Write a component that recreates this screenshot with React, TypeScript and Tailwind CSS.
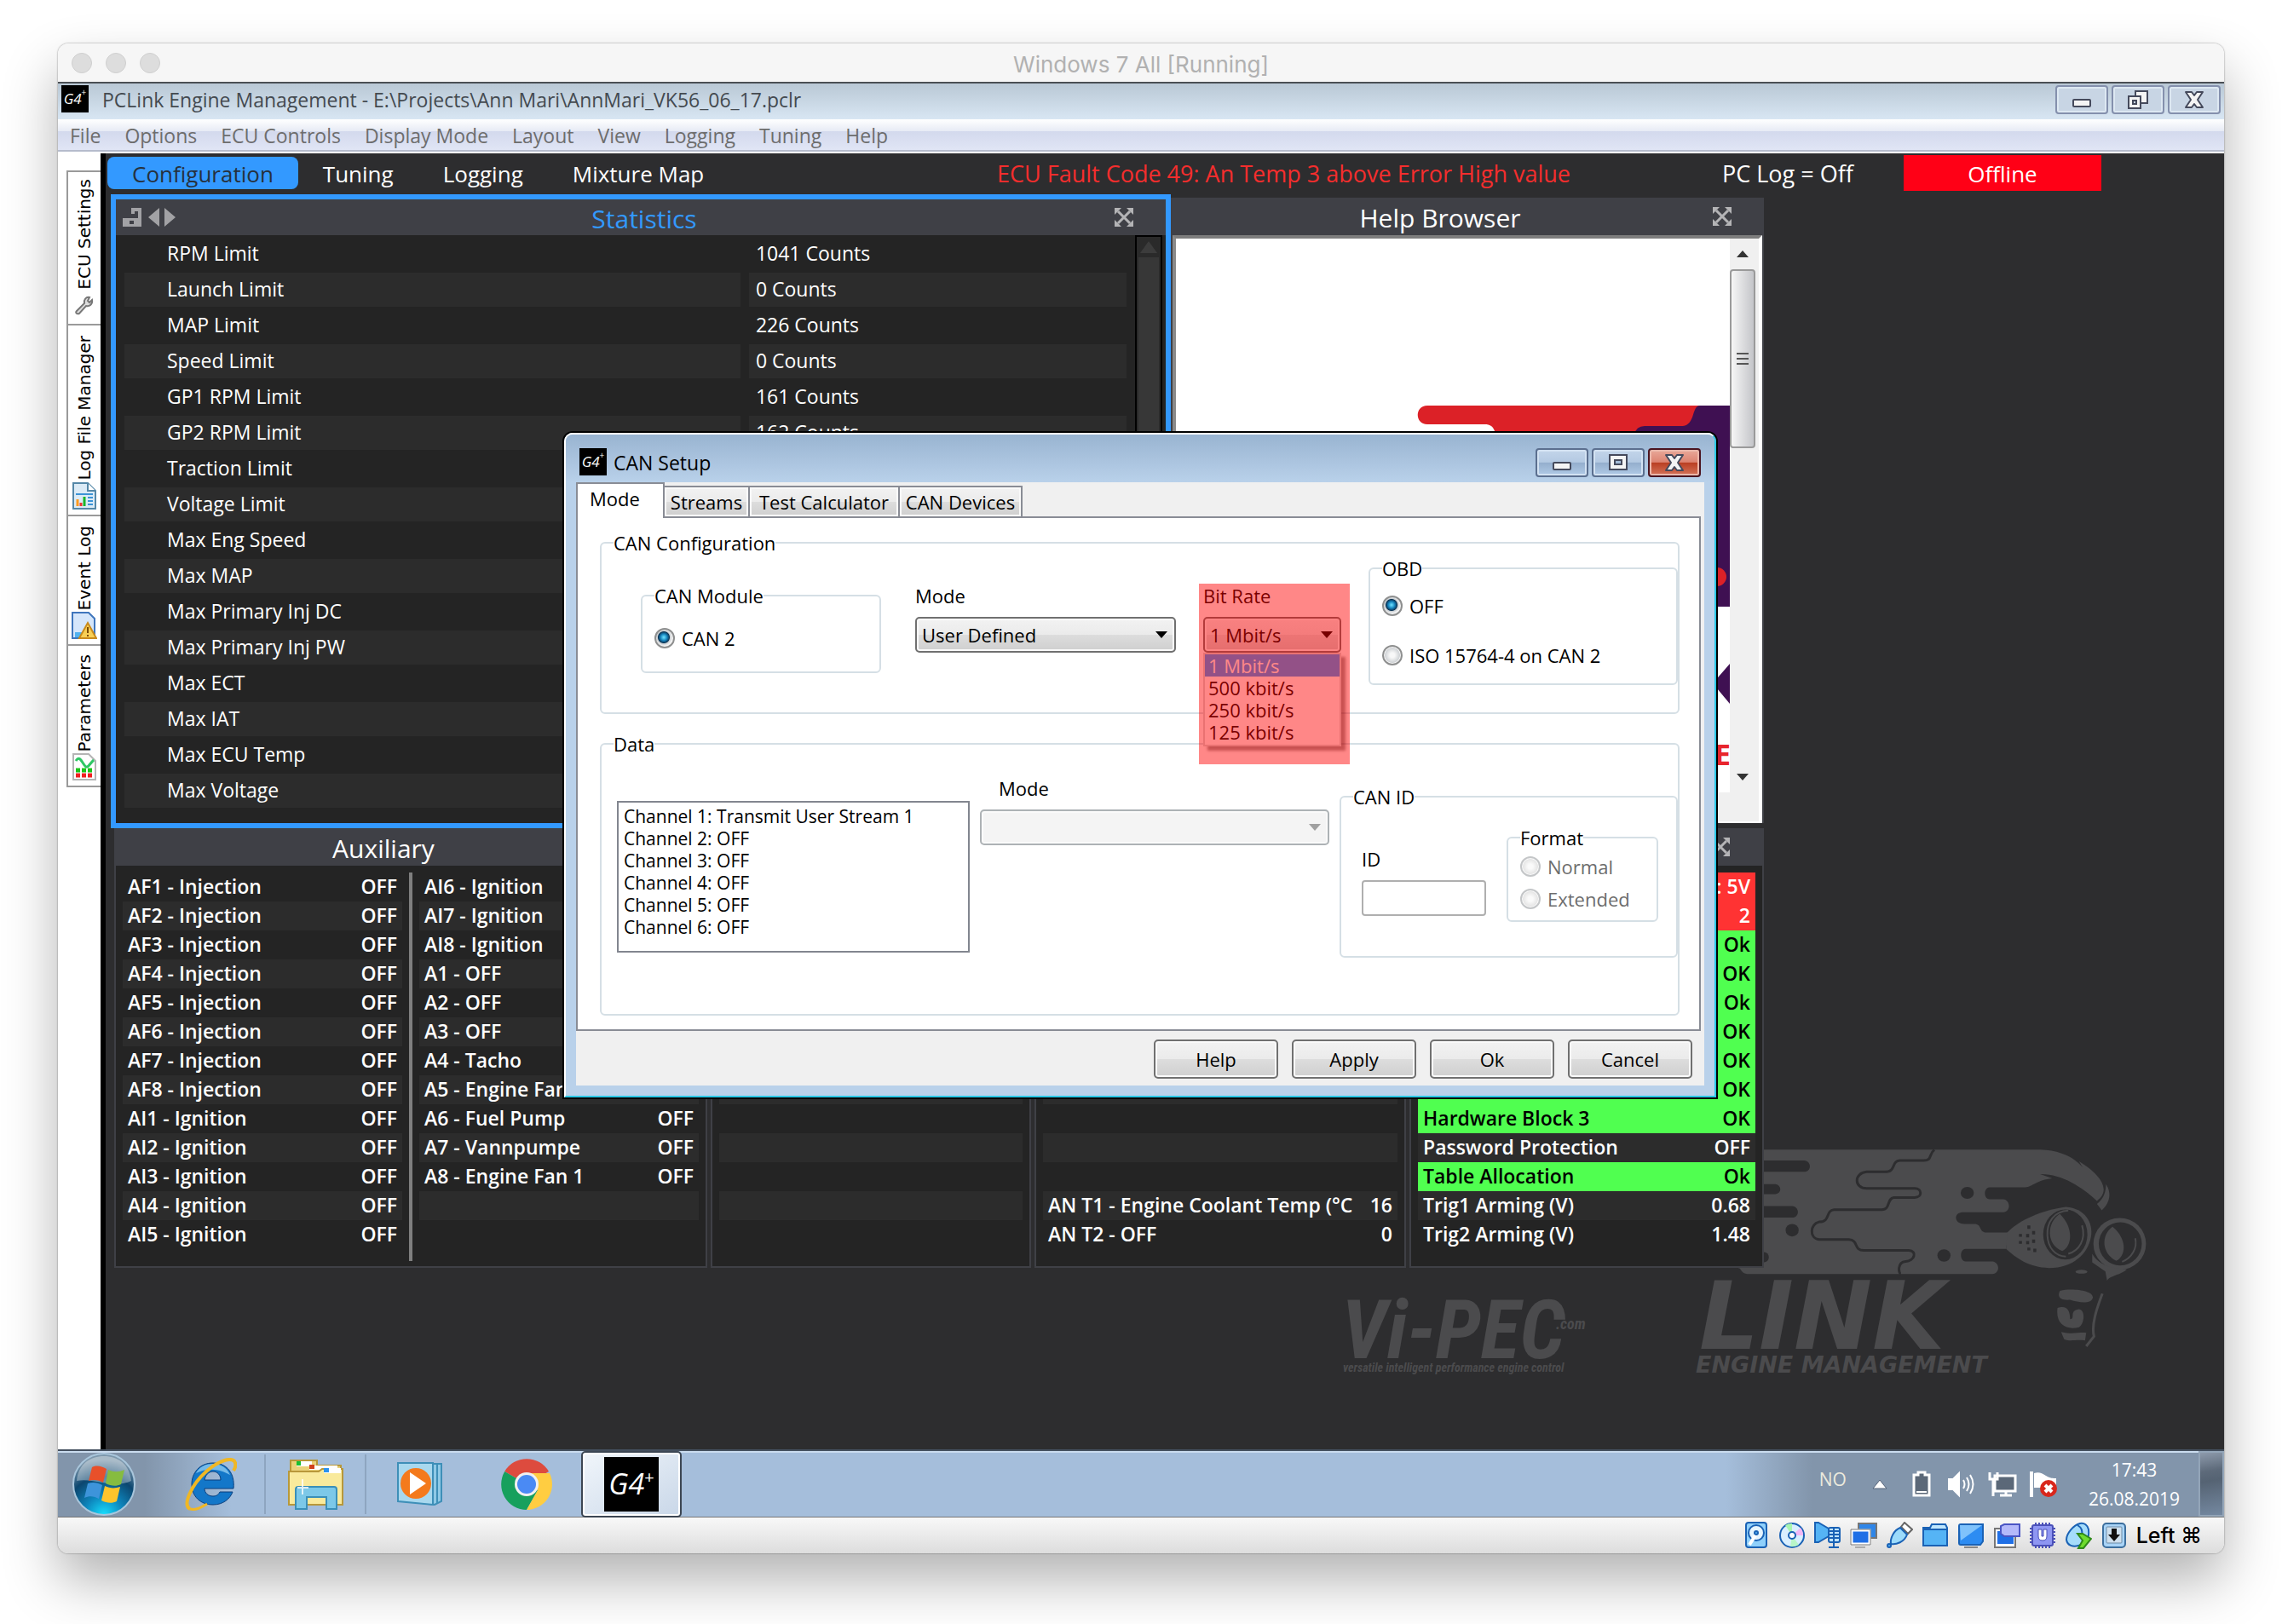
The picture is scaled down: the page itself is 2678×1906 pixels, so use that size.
import type { ReactNode } from 'react';
import clsx from 'clsx';

const statistics = [
  ['RPM Limit', '1041 Counts'],
  ['Launch Limit', '0 Counts'],
  ['MAP Limit', '226 Counts'],
  ['Speed Limit', '0 Counts'],
  ['GP1 RPM Limit', '161 Counts'],
  ['GP2 RPM Limit', '162 Counts'],
  ['Traction Limit', ''],
  ['Voltage Limit', ''],
  ['Max Eng Speed', ''],
  ['Max MAP', ''],
  ['Max Primary Inj DC', ''],
  ['Max Primary Inj PW', ''],
  ['Max ECT', ''],
  ['Max IAT', ''],
  ['Max ECU Temp', ''],
  ['Max Voltage', ''],
];

type Row = { name: string; value: string; tone?: 'ok' | 'error' };

const off = (name: string): Row => ({ name, value: 'OFF' });
const empty: Row = { name: '', value: '' };

const auxLeft: Row[] = [
  off('AF1 - Injection'),
  off('AF2 - Injection'),
  off('AF3 - Injection'),
  off('AF4 - Injection'),
  off('AF5 - Injection'),
  off('AF6 - Injection'),
  off('AF7 - Injection'),
  off('AF8 - Injection'),
  off('AI1 - Ignition'),
  off('AI2 - Ignition'),
  off('AI3 - Ignition'),
  off('AI4 - Ignition'),
  off('AI5 - Ignition'),
];

const auxRight: Row[] = [
  off('AI6 - Ignition'),
  off('AI7 - Ignition'),
  off('AI8 - Ignition'),
  off('A1 - OFF'),
  off('A2 - OFF'),
  off('A3 - OFF'),
  off('A4 - Tacho'),
  off('A5 - Engine Fan 2'),
  off('A6 - Fuel Pump'),
  off('A7 - Vannpumpe'),
  off('A8 - Engine Fan 1'),
  empty,
  empty,
];

const blank: Row[] = Array.from({ length: 13 }, () => empty);

const analog: Row[] = [
  ...blank.slice(0, 11),
  { name: 'AN T1 - Engine Coolant Temp (°C', value: '16' },
  { name: 'AN T2 - OFF', value: '0' },
];

const status: Row[] = [
  { name: '', value: ': 5V', tone: 'error' },
  { name: '', value: '2', tone: 'error' },
  { name: '', value: 'Ok', tone: 'ok' },
  { name: '', value: 'OK', tone: 'ok' },
  { name: '', value: 'Ok', tone: 'ok' },
  { name: '', value: 'OK', tone: 'ok' },
  { name: '', value: 'OK', tone: 'ok' },
  { name: '', value: 'OK', tone: 'ok' },
  { name: 'Hardware Block 3', value: 'OK', tone: 'ok' },
  { name: 'Password Protection', value: 'OFF' },
  { name: 'Table Allocation', value: 'Ok', tone: 'ok' },
  { name: 'Trig1 Arming (V)', value: '0.68' },
  { name: 'Trig2 Arming (V)', value: '1.48' },
];

const menus = ['File', 'Options', 'ECU Controls', 'Display Mode', 'Layout', 'View', 'Logging', 'Tuning', 'Help'];
const bitRates = ['1 Mbit/s', '500 kbit/s', '250 kbit/s', '125 kbit/s'];
const channels = [
  'Channel 1: Transmit User Stream 1',
  'Channel 2: OFF',
  'Channel 3: OFF',
  'Channel 4: OFF',
  'Channel 5: OFF',
  'Channel 6: OFF',
];

/* ---------- small shared pieces ---------- */

function G4Badge({ large = false }: { large?: boolean }) {
  return (
    <span
      className={clsx(
        'flex shrink-0 items-center justify-center bg-black italic text-white',
        large ? 'h-16 w-16 text-[34px]' : 'h-8 w-8 text-[17px]',
      )}
    >
      G4<sup className={clsx('-top-2 not-italic', large ? 'text-[20px]' : 'text-[10px]')}>+</sup>
    </span>
  );
}

function ExpandIcon() {
  return (
    <svg viewBox="0 0 22 22" className="h-[22px] w-[22px]" fill="#b4b4b6" stroke="#b4b4b6" strokeWidth="3">
      <path d="M4 4 18 18M18 4 4 18" />
      <path stroke="none" d="M0 0H8L0 8ZM22 0H14L22 8ZM0 22H8L0 14ZM22 22H14L22 14Z" />
    </svg>
  );
}

function PanelHeader({ title, active = false, tools }: { title: string; active?: boolean; tools?: ReactNode }) {
  return (
    <header className={clsx('flex items-center bg-[#3f4046]', active ? 'h-[42px]' : 'h-11')}>
      {tools}
      <h2 className={clsx('flex-1 pt-1 text-center text-[30px] leading-9', active ? 'text-[#3399ff]' : 'text-white')}>
        {title}
      </h2>
      <div className="w-16 shrink-0 pl-1">
        <button aria-label={`Expand ${title}`} className="block">
          <ExpandIcon />
        </button>
      </div>
    </header>
  );
}

function DataRows({ rows, label }: { rows: Row[]; label: string }) {
  return (
    <table aria-label={label} className="w-full table-fixed border-collapse text-[23px] leading-8 font-semibold">
      <tbody>
        {rows.map((row, i) => (
          <tr
            key={i}
            className={clsx(
              row.tone === 'ok' && 'bg-[#50ff50] text-black',
              row.tone === 'error' && 'bg-[#ff3333] text-white',
              !row.tone && (i % 2 ? 'bg-[#2c2c2c] text-white' : 'text-white'),
            )}
          >
            <td className="h-[34px] overflow-visible p-0 pb-0.5 pl-1.5 whitespace-nowrap">{row.name}</td>
            <td className="w-16 p-0 pr-1.5 pb-0.5 text-right whitespace-nowrap">{row.value}</td>
          </tr>
        ))}
      </tbody>
    </table>
  );
}

function DataPanel({ title, children }: { title: string; children: ReactNode }) {
  return (
    <section className="min-w-0 border-2 border-t-0 border-[#3f4046] bg-[#242424]">
      <PanelHeader title={title} />
      <div className="flex gap-2 px-2 pt-2 pb-1.5">{children}</div>
    </section>
  );
}

/* ---------- outer window chrome ---------- */

function HostTitleBar() {
  return (
    <div className="relative flex h-[47px] items-center justify-center border-b-2 border-[#4a4f54] bg-[#f6f6f6]">
      <div className="absolute left-4 flex gap-4">
        {['Close', 'Minimise', 'Zoom'].map((name) => (
          <button key={name} aria-label={name} className="h-6 w-6 rounded-full border border-[#cfcfcf] bg-[#dddddd]" />
        ))}
      </div>
      <h1 className="pt-1 font-[Inter,sans-serif] text-[26px] leading-8 text-[#b1b1b1]">Windows 7 All [Running]</h1>
    </div>
  );
}

function MinGlyph() {
  return (
    <svg viewBox="0 0 24 20" className="h-5 w-6">
      <rect x="2" y="10" width="20" height="8" rx="1" fill="#f4f4f4" stroke="#454a5c" strokeWidth="2" />
    </svg>
  );
}

function CloseGlyph() {
  return (
    <svg viewBox="0 0 24 20" className="h-5 w-6">
      <path
        d="M2 1H9L12 5 15 1H22L16 10 22 19H15L12 15 9 19H2L8 10Z"
        fill="#f4f4f4"
        stroke="#454a5c"
        strokeWidth="2"
        strokeLinejoin="round"
      />
    </svg>
  );
}

function AppTitleBar() {
  const button =
    'flex h-[34px] w-[62px] items-center justify-center rounded-[4px] border-2 border-[#8490ad] bg-[#c8d5e4] shadow-[inset_0_0_0_2px_#dde8f2]';
  return (
    <div className="flex h-[42px] items-start bg-linear-to-b from-[#b9c8d5] to-[#d8e6f3] px-1 pt-0.5">
      <G4Badge />
      <span className="ml-4 flex-1 text-[23px] leading-[34px] text-[#444a50]">
        PCLink Engine Management - E:\Projects\Ann Mari\AnnMari_VK56_06_17.pclr
      </span>
      <div className="flex gap-1">
        <button aria-label="Minimise" className={button}>
          <MinGlyph />
        </button>
        <button aria-label="Restore" className={button}>
          <svg viewBox="0 0 24 22" className="h-[22px] w-6" fill="#f4f4f4" stroke="#454a5c" strokeWidth="2">
            <path d="M9 1H23V15H9Z" />
            <path d="M1 7H15V21H1Z" />
            <path d="M6 12H10V16H6Z" fill="#c8d5e4" />
          </svg>
        </button>
        <button aria-label="Close" className={button}>
          <CloseGlyph />
        </button>
      </div>
    </div>
  );
}

function MenuBar() {
  return (
    <nav className="flex h-10 gap-7 border-b-2 border-white bg-[linear-gradient(#ffffff,#e7ebf5_36%,#d3d9ed_37%,#e0e5f5_94%,#b6bccc_95%)] pl-3.5">
      {menus.map((menu) => (
        <button key={menu} className="text-[23px] leading-9 text-[#6d6d6d]">
          {menu}
        </button>
      ))}
    </nav>
  );
}

/* ---------- left strip ---------- */

function SideTab({ label, className, icon }: { label: string; className: string; icon: ReactNode }) {
  return (
    <button
      className={clsx(
        'flex flex-col items-center justify-end border-b-2 border-l-2 border-[#9a9a9a] bg-white pb-1.5',
        className,
      )}
    >
      <span className="rotate-180 font-['DejaVu_Sans',sans-serif] text-[20px] leading-7 whitespace-nowrap text-black [writing-mode:vertical-rl]">
        {label}
      </span>
      {icon}
    </button>
  );
}

function SideTabs() {
  return (
    <aside className="flex w-14 shrink-0 flex-col border-r-[6px] border-black bg-white pt-5 pl-2.5">
      <SideTab
        label="ECU Settings"
        className="h-[182px] gap-1.5 border-t-2"
        icon={
          <svg viewBox="0 0 24 24" className="mb-1 h-6 w-6" fill="none" stroke="#777" strokeWidth="2">
            <path d="M3 19 12 10C11 6 14 2 18 3L16 7 18 9 21 6C22 11 18 14 14 13L6 22C3 23 1 21 3 19Z" fill="#ddd" />
          </svg>
        }
      />
      <SideTab
        label="Log File Manager"
        className="h-56 gap-0.5"
        icon={
          <svg viewBox="0 0 28 32" className="h-8 w-7">
            <path d="M1 1H18L27 10V31H1Z" fill="#dcebf6" stroke="#5588a8" strokeWidth="2" />
            <path d="M18 1V10H27" fill="#fff" stroke="#5588a8" strokeWidth="2" />
            <path d="M4 14H24" stroke="#3b93d6" strokeWidth="2" />
            <path d="M6 20V28" stroke="#ff9a1f" strokeWidth="3" />
            <path d="M10 24V28" stroke="#e33" strokeWidth="3" />
            <path d="M14 17V28" stroke="#19b52b" strokeWidth="3" />
            <path d="M18 18H24M18 22H24M18 26H24" stroke="#3b93d6" strokeWidth="2" />
          </svg>
        }
      />
      <SideTab
        label="Event Log"
        className="h-[152px] gap-0.5"
        icon={
          <svg viewBox="0 0 30 32" className="h-8 w-[30px]">
            <path d="M1 1H20L27 8V31H1Z" fill="#d5e6fb" stroke="#3f76bd" strokeWidth="2" />
            <path d="M4 24H12V30H4Z" fill="#51b2f0" />
            <path d="M19 13 29 31H9Z" fill="#f8cf55" stroke="#c98a1c" strokeWidth="2" />
            <path d="M19 18V25M19 27V29" stroke="#7a4a00" strokeWidth="2" />
          </svg>
        }
      />
      <SideTab
        label="Parameters"
        className="h-[166px] gap-0.5"
        icon={
          <svg viewBox="0 0 28 32" className="h-8 w-7">
            <path d="M1 1H19L27 9V31H1Z" fill="#fff" stroke="#b5b5b5" strokeWidth="2" />
            <path d="M4 9C8 3 10 8 14 14S20 12 25 8" fill="none" stroke="#2fc765" strokeWidth="3" />
            <path d="M4 20H23" stroke="#19c519" strokeWidth="5" strokeDasharray="5 2" />
            <path d="M4 26H23" stroke="#f02020" strokeWidth="5" strokeDasharray="5 2" />
          </svg>
        }
      />
    </aside>
  );
}

/* ---------- workspace ---------- */

function WorkspaceTabs() {
  return (
    <div className="flex h-12 text-[26px] leading-10 text-white">
      <div className="flex pt-1 pl-0.5">
        <button className="h-[38px] rounded-lg bg-[#3399ff] px-[29px] text-[#26313d]">Configuration</button>
        <button className="h-[38px] px-[29px]">Tuning</button>
        <button className="h-[38px] px-[29px]">Logging</button>
        <button className="h-[38px] px-[29px]">Mixture Map</button>
      </div>
      <p className="mt-1 mr-[178px] ml-auto text-[27px] text-[#f52d2d]">
        ECU Fault Code 49: An Temp 3 above Error High value
      </p>
      <p className="mt-1 mr-[50px] w-[163px] text-[27px]">PC Log = Off</p>
      <p className="mt-0.5 mr-36 h-[42px] w-[232px] bg-[#ff0016] text-center leading-[44px]">Offline</p>
    </div>
  );
}

function Statistics() {
  return (
    <section className="flex min-w-0 flex-col border-[6px] border-[#3399ff] bg-[#242424]">
      <PanelHeader
        title="Statistics"
        active
        tools={
          <div className="flex w-[72px] shrink-0 gap-2 pl-2">
            <svg viewBox="0 0 22 22" className="h-[22px] w-[22px]" fill="#a2a2a5">
              <path d="M0 12H22V22H0ZM8 15V19H13V15Z" fillRule="evenodd" />
              <path d="M20 13V2H12V7" fill="none" stroke="#a2a2a5" strokeWidth="4" />
            </svg>
            <svg viewBox="0 0 32 22" className="h-[22px] w-8" fill="#a2a2a5">
              <path d="M13 0V22L0 11ZM19 0V22L32 11Z" />
            </svg>
          </div>
        }
      />
      <div className="flex flex-1">
        <div className="flex-1 pb-4">
          <table
            aria-label="Statistics"
            className="w-full table-fixed border-separate border-spacing-x-2.5 border-spacing-y-0.5 text-[23px] leading-[38px] text-white"
          >
            <tbody>
              {statistics.map(([name, value], i) => (
                <tr key={name} className={clsx(i % 2 === 1 && '[&>td]:bg-[#2c2c2c]')}>
                  <td className="h-10 w-[62%] p-0 pb-0.5 pl-[50px]">{name}</td>
                  <td className="p-0 pb-0.5 pl-2">{value}</td>
                </tr>
              ))}
            </tbody>
          </table>
        </div>
        <div className="mr-1 flex w-8 flex-col items-center border-2 border-black bg-[#2a2a2a]">
          <svg viewBox="0 0 24 16" className="my-1 h-4 w-6">
            <path d="M12 1 22 15H2Z" fill="#3c3c3c" />
          </svg>
          <div className="w-6 flex-1 bg-[#373737]" />
        </div>
      </div>
    </section>
  );
}

function HelpBrowser() {
  return (
    <section className="mt-1 mb-1.5 flex min-w-0 flex-col bg-[#3f4046]">
      <PanelHeader title="Help Browser" />
      <div className="mr-0.5 ml-0.5 flex flex-1 flex-col border-t-4 border-r-4 border-b-2 border-l-4 border-t-[#7d7d7d] border-r-white border-b-white border-l-[#8a8a8a] bg-[#f0f0f0]">
        <div className="flex flex-1 pr-1">
          <div className="relative flex-1 overflow-hidden bg-white">
            <svg viewBox="1380 280 650 650" className="absolute top-0 right-0 h-[650px] w-[650px]">
              <path d="M1675 476H2030V712H1900V560H1758C1758 505 1755 498 1742 498H1675C1660 498 1660 476 1675 476Z" fill="#dc2127" />
              <path d="M1995 476H2030V712H1918V510Q1920 500 1930 500H1975C1990 498 1985 476 1995 476Z" fill="#3f1052" />
              <circle cx="2015" cy="677" r="11" fill="#dc2127" />
              <path d="M2030 779V826L2010 802Z" fill="#3f1052" />
              <text x="2012" y="898" fontSize="34" fontWeight="700" fill="#e8252c" fontFamily="Open Sans">
                E
              </text>
            </svg>
          </div>
          <div className="flex w-[30px] shrink-0 flex-col items-center">
            <svg viewBox="0 0 14 8" className="my-3.5 h-2 w-3.5">
              <path d="M7 0 14 8H0Z" fill="#333" />
            </svg>
            <div className="flex h-[210px] w-[30px] flex-col items-center justify-center gap-1 rounded-sm border-2 border-[#9a9a9a] bg-linear-to-r from-[#f6f6f6] to-[#c4c5c9]">
              <span className="h-0.5 w-3.5 bg-[#555]" />
              <span className="h-0.5 w-3.5 bg-[#555]" />
              <span className="h-0.5 w-3.5 bg-[#555]" />
            </div>
            <svg viewBox="0 0 14 8" className="mt-auto mb-3.5 h-2 w-3.5">
              <path d="M7 8 14 0H0Z" fill="#333" />
            </svg>
          </div>
        </div>
        <div className="h-[34px] shrink-0" />
      </div>
    </section>
  );
}

function Watermark() {
  return (
    <svg
      viewBox="0 0 954 285"
      className="absolute right-[86px] bottom-[68px] h-[285px] w-[954px]"
      fill="#4b4b4d"
      fontFamily="Roboto Condensed, Liberation Sans, sans-serif"
    >
      <text x="4" y="246" fontSize="96" fontWeight="700" fontStyle="italic">
        Vi-PEC
      </text>
      <text x="256" y="212" fontSize="18" fontWeight="700" fontStyle="italic">
        .com
      </text>
      <text x="6" y="262" fontSize="14" fontWeight="700" fontStyle="italic">
        versatile intelligent performance engine control
      </text>
      <text x="424" y="235" fontSize="110" fontWeight="700" fontStyle="italic" fontFamily="DejaVu Sans">
        LINK
      </text>
      <text x="420" y="263" fontSize="27" fontWeight="700" fontStyle="italic" fontFamily="DejaVu Sans">
        ENGINE MANAGEMENT
      </text>
      <svg x="470" y="0" width="484" height="237" viewBox="770 80 690 710" preserveAspectRatio="none">
        <path d="M770 84H1275C1330 88 1350 150 1355 178L1340 125C1375 170 1395 225 1370 264C1345 215 1310 168 1275 170L1295 185C1270 190 1262 215 1250 216H1190C1180 218 1180 256 1190 258H1213C1226 260 1226 304 1213 304H1145C1130 305 1130 345 1148 345H1165C1178 345 1172 375 1185 375H1222L1218 433H1150C1140 435 1140 475 1150 477H1195C1208 480 1208 520 1195 521H785C775 520 775 500 770 500Z" />
        <path d="M1385 205C1396 240 1390 275 1378 297L1370 275C1382 255 1385 230 1385 205Z" />
        <g fill="#2d2d2f">
          <path d="M770 122H880C893 124 893 162 880 162H770ZM770 205H832C843 208 843 238 832 240H770ZM770 282H860C873 285 873 322 860 323H770Z" />
          <ellipse cx="860" cy="367" rx="11" ry="22" />
          <ellipse cx="813" cy="462" rx="8" ry="18" />
          <ellipse cx="1153" cy="236" rx="11" ry="21" />
          <ellipse cx="1114" cy="456" rx="11" ry="22" />
        </g>
        <path
          d="M1098 84C1088 100 1095 122 1080 122H1040C1025 125 1035 162 1015 162H985C963 165 963 220 985 220H1065C1078 220 1078 252 1065 252H1030C1018 255 1025 295 1010 295H930C915 298 925 338 905 338C890 345 888 395 905 400H955C972 402 962 438 980 438H1055C1070 440 1065 475 1050 477C1035 480 1038 520 1042 521"
          fill="none"
          stroke="#2d2d2f"
          strokeWidth="3"
          vectorEffect="non-scaling-stroke"
        />
        <path d="M1220 375C1240 330 1280 295 1318 285C1350 290 1364 340 1360 390C1355 450 1330 500 1290 500C1255 498 1235 465 1218 433Z" />
        <ellipse cx="1317" cy="382" rx="37" ry="88" fill="#2d2d2f" />
        <path d="M1308 310C1285 340 1285 420 1312 440C1328 425 1332 360 1308 310Z" />
        <path
          d="M1345 350C1352 400 1340 440 1322 450M1322 298C1298 300 1286 340 1287 385C1288 430 1300 458 1318 460"
          fill="none"
          stroke="#4b4b4d"
          strokeWidth="2"
          vectorEffect="non-scaling-stroke"
        />
        <path
          d="M1242 380V390M1256 350V362M1254 380V392M1264 370V382M1242 405V415M1254 405V416M1264 400V412M1256 428V438M1266 432V444"
          stroke="#2d2d2f"
          strokeWidth="5"
        />
        <ellipse cx="1408" cy="415" rx="44" ry="91" />
        <ellipse cx="1409" cy="415" rx="36" ry="76" fill="#2d2d2f" />
        <path d="M1396 355C1376 385 1378 450 1402 475C1418 460 1422 400 1396 355Z" />
        <path
          d="M1434 395C1438 430 1428 465 1412 478"
          fill="none"
          stroke="#4b4b4d"
          strokeWidth="2"
          vectorEffect="non-scaling-stroke"
        />
        <path d="M1362 450C1370 480 1385 500 1420 505C1410 525 1390 528 1387 545L1384 512L1362 480Z" />
        <ellipse cx="1344" cy="513" rx="10" ry="7" />
        <path d="M1308 580C1330 570 1365 580 1363 605C1360 628 1340 622 1325 612C1308 615 1303 600 1308 580ZM1304 640C1320 630 1325 650 1325 680C1335 680 1322 650 1340 645C1352 650 1348 700 1340 708C1320 720 1300 700 1304 640ZM1310 725C1330 735 1340 725 1352 728L1350 755C1335 750 1325 760 1315 750Z" />
        <path
          d="M1379 590C1370 640 1360 700 1365 740L1352 775"
          fill="none"
          stroke="#4b4b4d"
          strokeWidth="3"
          vectorEffect="non-scaling-stroke"
        />
      </svg>
    </svg>
  );
}

function Workspace() {
  return (
    <main className="relative min-w-0 flex-1 bg-[#2d2d2f]">
      <Watermark />
      <div className="relative">
        <WorkspaceTabs />
        <div className="grid grid-cols-[1940fr_540fr] pl-1.5">
          <div className="min-w-0">
            <div className="grid grid-cols-[1244fr_696fr]">
              <Statistics />
              <HelpBrowser />
            </div>
            <div className="grid grid-cols-[696fr_376fr_436fr_416fr] gap-1 pl-1">
              <DataPanel title="Auxiliary">
                <div className="flex-1 pb-3.5">
                  <DataRows rows={auxLeft} label="Auxiliary outputs 1" />
                </div>
                <div className="w-1 bg-[#7f7f7f]" />
                <div className="flex-1 pb-3.5">
                  <DataRows rows={auxRight} label="Auxiliary outputs 2" />
                </div>
              </DataPanel>
              <DataPanel title="">
                <DataRows rows={blank} label="Digital inputs" />
              </DataPanel>
              <DataPanel title="">
                <DataRows rows={analog} label="Analog inputs" />
              </DataPanel>
              <DataPanel title="">
                <DataRows rows={status} label="ECU status" />
              </DataPanel>
            </div>
          </div>
        </div>
      </div>
    </main>
  );
}

/* ---------- CAN setup dialog ---------- */

function Group({ title, className, children }: { title: string; className: string; children: ReactNode }) {
  return (
    <fieldset className={clsx('min-w-0 rounded-md border-2 border-[#d5dfe5]', className)}>
      <legend className="ml-3.5 text-[22px] leading-[30px]">{title}</legend>
      {children}
    </fieldset>
  );
}

type RadioProps = { name: string; label: string; checked?: boolean; disabled?: boolean; className?: string };

function Radio({ name, label, checked, disabled, className }: RadioProps) {
  return (
    <label className={clsx('flex items-center gap-2', disabled && 'text-[#6d6d6d]', className)}>
      <input
        type="radio"
        name={name}
        defaultChecked={checked}
        disabled={disabled}
        className="h-6 w-6 shrink-0 appearance-none rounded-full border-2 border-[#8e8f8f] bg-[radial-gradient(circle,#f8f8f8_20%,#d0d3d6_60%,#f4f4f4_65%)] checked:bg-[radial-gradient(circle_at_45%_45%,#5fd3f5_5%,#1583bd_25%,#0c3556_42%,#c9ced2_48%,#f4f4f4_65%)] disabled:border-[#c4c6c8] disabled:bg-[radial-gradient(circle,#fafafa_20%,#e6e6e6_60%,#f8f8f8_65%)]"
      />
      {label}
    </label>
  );
}

function DropDown({ id, value, className, disabled = false }: { id: string; value: string; className: string; disabled?: boolean }) {
  return (
    <div className={clsx('relative', className)}>
      <select
        id={id}
        disabled={disabled}
        defaultValue={value}
        className="h-[42px] w-full appearance-none rounded-[5px] border-2 border-[#707070] bg-[linear-gradient(#f2f2f2,#ebebeb_49%,#dddddd_50%,#cfcfcf)] pl-1.5 text-[22px] leading-[30px] text-black shadow-[inset_0_0_0_2px_#fafafa] disabled:border-[#adb2b5] disabled:bg-[#f4f4f4] disabled:bg-none disabled:opacity-100"
      >
        <option>{value}</option>
      </select>
      <svg
        viewBox="0 0 14 8"
        className={clsx('pointer-events-none absolute top-[17px] right-2.5 h-2 w-3.5', disabled ? 'fill-[#a0a0a0]' : 'fill-black')}
      >
        <path d="M0 0H14L7 8Z" />
      </svg>
    </div>
  );
}

function BitRate() {
  return (
    <div className="relative mt-8 ml-8 w-[162px] shrink-0">
      <label htmlFor="bit-rate">Bit Rate</label>
      <DropDown id="bit-rate" value="1 Mbit/s" className="mt-2.5" />
      <ul
        role="listbox"
        aria-label="Bit rates"
        className="absolute top-[82px] left-0 z-10 w-full border-2 border-[#d8d8d8] bg-white pb-0.5 leading-[26px] shadow-[5px_5px_3px_rgba(0,0,0,0.4)]"
      >
        {bitRates.map((rate, i) => (
          <li key={rate} role="option" aria-selected={i === 0} className={clsx('pl-1', i === 0 && 'bg-[#3399ff] text-white')}>
            {rate}
          </li>
        ))}
      </ul>
      {/* highlight marker */}
      <div className="pointer-events-none absolute top-px -right-2.5 -left-[5px] z-20 h-[212px] bg-[#ff0000]/47" />
    </div>
  );
}

function ModePage() {
  return (
    <div className="mr-1 border-2 border-[#898c95] bg-white pt-3.5 pr-[23px] pb-4 pl-[26px]">
      <Group title="CAN Configuration" className="h-[216px]">
        <div className="flex items-start">
          <Group title="CAN Module" className="mt-8 ml-[46px] h-[106px] w-[282px]">
            <Radio name="module" label="CAN 2" checked className="mt-5 ml-3.5" />
          </Group>
          <div className="mt-8 ml-10 w-[306px]">
            <label htmlFor="config-mode">Mode</label>
            <DropDown id="config-mode" value="User Defined" className="mt-2.5" />
          </div>
          <BitRate />
          <Group title="OBD" className="ml-8 h-[152px] flex-1">
            <Radio name="obd" label="OFF" checked className="mt-3.5 ml-3.5" />
            <Radio name="obd" label="ISO 15764-4 on CAN 2" className="mt-7 ml-3.5" />
          </Group>
        </div>
      </Group>
      <Group title="Data" className="mt-5 h-[334px]">
        <div className="flex items-start">
          <select
            aria-label="Channels"
            size={6}
            className="mt-[52px] ml-[18px] h-[178px] w-[414px] appearance-none overflow-hidden border-2 border-[#82868f] bg-white pt-0.5 pl-1.5 text-[21px]"
          >
            {channels.map((channel) => (
              <option key={channel} className="h-[26px] min-h-0 p-0 leading-[26px]">
                {channel}
              </option>
            ))}
          </select>
          <div className="mt-[22px] ml-3 w-[410px]">
            <label htmlFor="data-mode" className="ml-[22px]">
              Mode
            </label>
            <DropDown id="data-mode" value="" disabled className="mt-2.5" />
          </div>
          <Group title="CAN ID" className="mt-8 ml-3 h-[204px] flex-1">
            <div className="flex items-start">
              <div className="mt-[43px] ml-6 flex flex-col gap-2.5">
                <label htmlFor="can-id">ID</label>
                <input id="can-id" type="text" className="h-[42px] w-[146px] rounded-sm border-2 border-[#afafaf] bg-white px-1" />
              </div>
              <Group title="Format" className="mt-[18px] ml-6 h-[114px] w-[178px]">
                <Radio name="format" label="Normal" disabled className="mt-1 ml-3.5" />
                <Radio name="format" label="Extended" disabled className="mt-2 ml-3.5" />
              </Group>
            </div>
          </Group>
        </div>
      </Group>
    </div>
  );
}

function CanSetup() {
  const caption = 'flex h-[34px] w-[62px] items-center justify-center rounded-[4px] border-2';
  const blueCaption =
    'border-[#5b6f8f] bg-[linear-gradient(#c3d5ea,#b4c9e2_48%,#94aecd_50%,#b0cae6)] shadow-[inset_0_0_0_2px_#d3e2f2]';
  const tab =
    'h-[38px] border-2 border-l-0 border-[#898c95] bg-[linear-gradient(#f2f2f2,#ebebeb_49%,#dddddd_50%,#cfcfcf)] leading-[34px] shadow-[inset_0_0_0_2px_#fafafa]';
  return (
    <section
      role="dialog"
      aria-label="CAN Setup"
      className="absolute top-[326px] left-[592px] w-[1356px] rounded-t-xl border-2 border-black bg-[#b9d1ea] text-[22px] leading-[30px] text-black"
    >
      <div className="rounded-t-[10px] border-2 border-t-white border-r-[#2ac8e6] border-b-[#2ac8e6] border-l-white">
        <div className="flex h-14 items-start rounded-t-lg bg-linear-to-b from-[#99b4d1] to-[#b9d1ea] pt-4 pr-4 pl-4">
          <G4Badge />
          <h2 className="ml-2 flex-1 text-[23px] leading-[34px]">CAN Setup</h2>
          <div className="flex gap-1">
            <button aria-label="Minimise dialog" className={clsx(caption, blueCaption)}>
              <MinGlyph />
            </button>
            <button aria-label="Maximise dialog" className={clsx(caption, blueCaption)}>
              <svg viewBox="0 0 24 20" className="h-5 w-6" fill="#f4f4f4" stroke="#454a5c" strokeWidth="2">
                <path d="M2 1H22V18H2Z" />
                <path d="M8 7H16V12H8Z" fill="#a4bcd8" />
              </svg>
            </button>
            <button
              aria-label="Close dialog"
              className={clsx(
                caption,
                'border-[#4a1420] bg-[linear-gradient(#e9a99a,#dc8371_48%,#b93e22_50%,#d4745a)] shadow-[inset_0_0_0_2px_#eab7aa]',
              )}
            >
              <CloseGlyph />
            </button>
          </div>
        </div>
        <div className="mx-3 mb-3 bg-[#f0f0f0]">
          <div role="tablist" className="relative -mb-0.5 flex h-[42px] items-end">
            <button role="tab" aria-selected className="h-[42px] w-[104px] border-2 border-b-0 border-[#898c95] bg-white pb-1.5 pl-3.5 text-left">
              Mode
            </button>
            <button role="tab" className={clsx(tab, 'w-[100px]')}>
              Streams
            </button>
            <button role="tab" className={clsx(tab, 'w-44')}>
              Test Calculator
            </button>
            <button role="tab" className={clsx(tab, 'w-36')}>
              CAN Devices
            </button>
          </div>
          <ModePage />
          <div className="flex h-16 items-start justify-end gap-4 pt-2.5 pr-3.5">
            {['Help', 'Apply', 'Ok', 'Cancel'].map((name) => (
              <button
                key={name}
                className="h-[46px] w-[146px] rounded-[5px] border-2 border-[#707070] bg-[linear-gradient(#f2f2f2,#ebebeb_49%,#dddddd_50%,#cfcfcf)] shadow-[inset_0_0_0_2px_#fafafa]"
              >
                {name}
              </button>
            ))}
          </div>
        </div>
      </div>
    </section>
  );
}

/* ---------- task bar ---------- */

function TaskBar() {
  return (
    <footer className="flex h-20 items-center border-t-2 border-b border-t-[#44505f] border-b-[#777] bg-[linear-gradient(90deg,#8295ab_4%,#a5bedb_8%,#a5bedb_77%,#8295ab_81%)] shadow-[inset_0_2px_0_#c9dbee]">
      <button aria-label="Start" className="ml-4">
        <svg viewBox="0 0 76 76" className="h-[76px] w-[76px]">
          <defs>
            <radialGradient id="orb" cx="50%" cy="100%" r="90%">
              <stop offset="0" stopColor="#18e0ff" />
              <stop offset=".35" stopColor="#0d86bd" />
              <stop offset=".7" stopColor="#0c466f" />
              <stop offset="1" stopColor="#7d98ad" />
            </radialGradient>
          </defs>
          <circle cx="38" cy="38" r="36" fill="url(#orb)" stroke="#a9c6dc" strokeWidth="2" />
          <path d="M6 34C8 14 22 5 38 5S68 14 70 34C50 44 26 30 6 34Z" fill="#fff" opacity=".35" />
          <path d="M24 18C30 15 35 17 41 20L37 36C32 33 26 32 20 34Z" fill="#e8502a" />
          <path d="M43 21C50 24 55 24 62 21L58 38C52 41 46 40 40 37Z" fill="#86bc40" />
          <path d="M19 37C25 35 31 36 36 39L32 55C27 52 21 51 15 54Z" fill="#3d94da" />
          <path d="M39 40C45 43 51 43 57 41L53 58C47 61 41 60 35 57Z" fill="#fdc42c" />
        </svg>
      </button>
      <button aria-label="Internet Explorer" className="ml-14">
        <svg viewBox="0 0 62 62" className="h-[62px] w-[62px]">
          <path
            d="M34 6C18 6 9 18 9 31C9 45 19 55 34 55C46 55 54 48 57 40H42C40 44 37 45 34 45C28 45 24 41 24 36H58C60 18 50 6 34 6ZM24 26C25 20 29 16 34 16S43 20 43 26Z"
            fill="#1377c9"
            stroke="#0a3f7d"
            strokeWidth="1"
          />
          <path d="M14 18C18 10 26 7 34 7C44 7 51 13 54 20C40 12 26 12 14 18Z" fill="#9fd7f5" opacity=".7" />
          <path d="M7 60C-2 56 8 32 26 16C42 2 58 -2 60 6C61 9 60 12 58 15" fill="none" stroke="#f0b724" strokeWidth="4" />
          <path d="M7 60C14 62 20 58 27 54" fill="none" stroke="#f0b724" strokeWidth="3" />
        </svg>
      </button>
      <span className="ml-8 h-[70px] w-0.5 bg-[#8ea5c0]" />
      <button aria-label="Windows Explorer" className="ml-[26px]">
        <svg viewBox="0 0 66 60" className="h-[60px] w-[66px]">
          <path d="M3 2H34V8H62V52H3Z" fill="#ead27a" stroke="#b8983a" strokeWidth="2" />
          <path d="M10 3H28V9H10Z" fill="#fff" />
          <path d="M10 3H15V8H10Z" fill="#19c030" />
          <path d="M25 8H58V13H25Z" fill="#fff" />
          <path d="M25 7H31V12H25Z" fill="#d0401c" />
          <path d="M1 15H36L40 12H64V54H1Z" fill="#f9ea9c" stroke="#b8983a" strokeWidth="2" />
          <path d="M42 11H62V17H42Z" fill="#fff" />
          <path d="M42 11H48V16H42Z" fill="#2c93ee" />
          <path d="M9 59V36Q9 33 12 33H54Q57 33 57 36V59H45V45H22V59Z" fill="#7cc8e8" stroke="#3a8fb8" strokeWidth="2" />
          <path d="M17 24V42M11 34H24" stroke="#fff" strokeWidth="2" opacity=".8" />
        </svg>
      </button>
      <span className="ml-6 h-[70px] w-0.5 bg-[#8ea5c0]" />
      <button aria-label="Media Player" className="ml-9">
        <svg viewBox="0 0 60 52" className="h-[52px] w-[60px]">
          <path d="M14 2H52V46L44 50L14 46Z" fill="#8fc9e6" stroke="#3e8fb8" strokeWidth="2" />
          <path d="M47 3V48" stroke="#3e8fb8" strokeWidth="2" />
          <path d="M1 1H42V50L1 46Z" fill="#a8d8ee" stroke="#3e8fb8" strokeWidth="2" />
          <circle cx="22" cy="25" r="18" fill="#f47a1c" />
          <path d="M15 12 34 25 15 38Z" fill="#fff" />
        </svg>
      </button>
      <button aria-label="Chrome" className="ml-[62px]">
        <svg viewBox="0 0 60 60" className="h-[60px] w-[60px]">
          <path d="M30 30 4.200 15A30 30 0 0 1 56 15Z" fill="#dd4b3e" />
          <path d="M30 30 4.200 15A30 30 0 0 0 30 60L43 37Z" fill="#17a05d" />
          <path d="M30 30V17H57A30 30 0 0 1 30 60L43 37Z" fill="#ffcd41" />
          <circle cx="30" cy="30" r="14" fill="#f1f1f1" />
          <circle cx="30" cy="30" r="11" fill="#4a8af4" />
        </svg>
      </button>
      <button
        aria-label="PCLink"
        className="ml-[34px] flex h-[78px] w-[118px] items-center justify-center rounded-[5px] border-2 border-[#3c4653] bg-linear-to-br from-[#f1f6fb] to-[#c9d7e8] shadow-[inset_0_0_0_2px_#ffffff]"
      >
        <G4Badge large />
      </button>
      <span className="mb-3 ml-auto text-[21px] leading-6 text-[#eceadd]">NO</span>
      <svg viewBox="0 0 18 12" className="ml-[30px] h-3 w-[18px]">
        <path d="M9 1 17 11H1Z" fill="#fff" stroke="#55647a" />
      </svg>
      <svg viewBox="0 0 24 32" className="ml-7 h-8 w-6" fill="none" stroke="#fff" strokeWidth="3">
        <path d="M8 5V2H16V5H21V29H3V5Z" fill="#5b6878" />
        <path d="M6 25H18" strokeWidth="2" />
      </svg>
      <svg viewBox="0 0 34 32" className="ml-[18px] h-8 w-[34px]" fill="none" stroke="#fff" strokeWidth="2">
        <path d="M2 10H7L14 3V29L7 22H2Z" fill="#fff" />
        <path d="M19 11Q22 16 19 21M23 8Q28 16 23 24M27 5Q34 16 27 27" />
      </svg>
      <svg viewBox="0 0 34 32" className="ml-[14px] h-8 w-[34px]" fill="none" stroke="#fff" strokeWidth="3">
        <path d="M8 6H32V24H8Z" fill="#5b6878" />
        <path d="M14 29H28M21 24V29" />
        <path d="M2 2V10H11V2M6 10V30" />
      </svg>
      <svg viewBox="0 0 34 32" className="ml-[14px] h-8 w-[34px]">
        <path d="M3 1V31" stroke="#fff" strokeWidth="4" />
        <path d="M6 3C12 1 15 3 20 6S28 9 32 9V20H6Z" fill="#fff" />
        <circle cx="23" cy="21" r="10" fill="#d9271c" />
        <path d="M19 17 27 25M27 17 19 25" stroke="#fff" strokeWidth="4" />
      </svg>
      <time className="ml-9 flex flex-col items-center text-[21px] leading-[34px] text-white">
        <span>17:43</span>
        <span>26.08.2019</span>
      </time>
      <button
        aria-label="Show desktop"
        className="ml-[22px] h-full w-[30px] border-2 border-[#93a5b8] bg-[linear-gradient(170deg,#8d9aab,#5d6a7a_30%,#556373_45%,#7488a0)]"
      />
    </footer>
  );
}

function StatusIcon({ children }: { children: ReactNode }) {
  return (
    <svg viewBox="0 0 32 32" className="h-8 w-8" fill="#55b4f5" stroke="#1a62b5" strokeWidth="2">
      {children}
    </svg>
  );
}

function HostStatusBar() {
  return (
    <div className="flex h-[42px] items-center justify-end gap-2.5 bg-linear-to-b from-[#f8f8f8] to-[#dddddd] pr-[26px]">
      <StatusIcon>
        <rect x="4" y="1" width="24" height="29" rx="3" fill="#8fd0fb" />
        <circle cx="16" cy="13" r="9" fill="#e6f5ff" />
        <circle cx="16" cy="13" r="2" />
        <path d="M8 27 15 16" stroke="#fff" strokeWidth="4" />
      </StatusIcon>
      <StatusIcon>
        <circle cx="16" cy="16" r="14" fill="#d9efff" />
        <path d="M16 16 8 4A14 14 0 0 1 16 2Z" fill="#a8f5b0" stroke="none" />
        <path d="M16 16 26 7A14 14 0 0 1 29 16Z" fill="#f3b8f5" stroke="none" />
        <path d="M16 16 24 27A14 14 0 0 1 14 29Z" fill="#b8f5c8" stroke="none" />
        <circle cx="16" cy="16" r="4" fill="#fff" />
      </StatusIcon>
      <StatusIcon>
        <path d="M1 1H5L17 8V17L5 24H1Z" />
        <rect x="17" y="7" width="13" height="17" rx="2" fill="#bfe3fd" />
        <path d="M18 11H29M18 15H29M18 19H29M23 7V30M17 30H29" />
      </StatusIcon>
      <StatusIcon>
        <rect x="10" y="2" width="21" height="17" fill="#2f86e8" stroke="#777" />
        <rect x="2" y="10" width="21" height="16" fill="#1f6fe6" stroke="#fff" strokeWidth="3" />
        <path d="M1 9H24V27H1ZM6 30H18" fill="none" stroke="#777" strokeWidth="1" />
      </StatusIcon>
      <StatusIcon>
        <path d="M22 1 31 9 26 14 18 6Z" fill="#fff" stroke="#666" />
        <path d="M17 7 25 15C22 24 12 27 6 26C5 20 9 10 17 7Z" fill="#9cdbfb" />
        <circle cx="4" cy="28" r="2" />
      </StatusIcon>
      <StatusIcon>
        <path d="M12 3H28L30 7V28H2V7H10Z" fill="#bfe6fd" />
        <path d="M2 9H30V28H2Z" />
      </StatusIcon>
      <StatusIcon>
        <path d="M2 5Q2 3 4 3H30V23L27 27H4Q2 27 2 25Z" fill="#2d8cf2" />
        <path d="M3 4H29L4 22Z" fill="#7fc2fb" stroke="none" />
        <path d="M8 30H24" stroke="#888" />
      </StatusIcon>
      <StatusIcon>
        <path d="M2 8H26V30H2Z" fill="#fff" stroke="#777" />
        <path d="M5 11H24V26H5Z" fill="#1f6fe6" stroke="none" />
        <path d="M13 3H31V17H13L9 14V5Z" fill="#b4b9fa" stroke="#4a55c4" />
      </StatusIcon>
      <StatusIcon>
        <path
          d="M8 1V31M12 1V31M16 1V31M20 1V31M24 1V31M1 8H31M1 12H31M1 16H31M1 20H31M1 24H31"
          stroke="#4a50b8"
        />
        <rect x="4" y="4" width="24" height="24" rx="2" fill="#8e96f2" stroke="#4a50b8" />
        <path d="M11 9V17Q11 22 16 22T21 17V9H17V17H15V9Z" fill="#fff" stroke="#4a50b8" strokeWidth="1" />
      </StatusIcon>
      <StatusIcon>
        <path d="M18 2C10 4 2 14 2 21C3 28 10 30 16 28C26 26 29 18 28 9C27 4 23 1 18 2Z" fill="#a5dcfb" />
        <path d="M15 4Q22 8 20 16" fill="none" />
        <path d="M15 14H21L31 20 22 31H16L21 22Z" fill="#6fdc2e" stroke="#2f8a1a" />
      </StatusIcon>
      <StatusIcon>
        <rect x="3" y="2" width="26" height="28" rx="4" fill="#a9d4f7" stroke="#3d6f9e" />
        <rect x="7" y="6" width="18" height="19" rx="1" fill="#cfe0ee" stroke="#6d8ba6" strokeWidth="1" />
        <path d="M13 8H19V15H23L16 23 9 15H13Z" fill="#111" stroke="none" />
      </StatusIcon>
      <span className="font-[Inter,'DejaVu_Sans',sans-serif] text-[25px] leading-8 font-medium text-black">Left ⌘</span>
    </div>
  );
}

export default function App() {
  return (
    <div className="flex min-h-screen bg-white px-[68px] pt-[51px] pb-[83px] font-['Open_Sans','Noto_Sans',sans-serif]">
      <div className="flex flex-1 flex-col overflow-hidden rounded-xl bg-white shadow-[0_0_2px_rgba(0,0,0,0.5),0_32px_64px_rgba(0,0,0,0.3)]">
        <HostTitleBar />
        <AppTitleBar />
        <MenuBar />
        <div className="relative flex flex-1">
          <SideTabs />
          <Workspace />
          <CanSetup />
        </div>
        <TaskBar />
        <HostStatusBar />
      </div>
    </div>
  );
}
